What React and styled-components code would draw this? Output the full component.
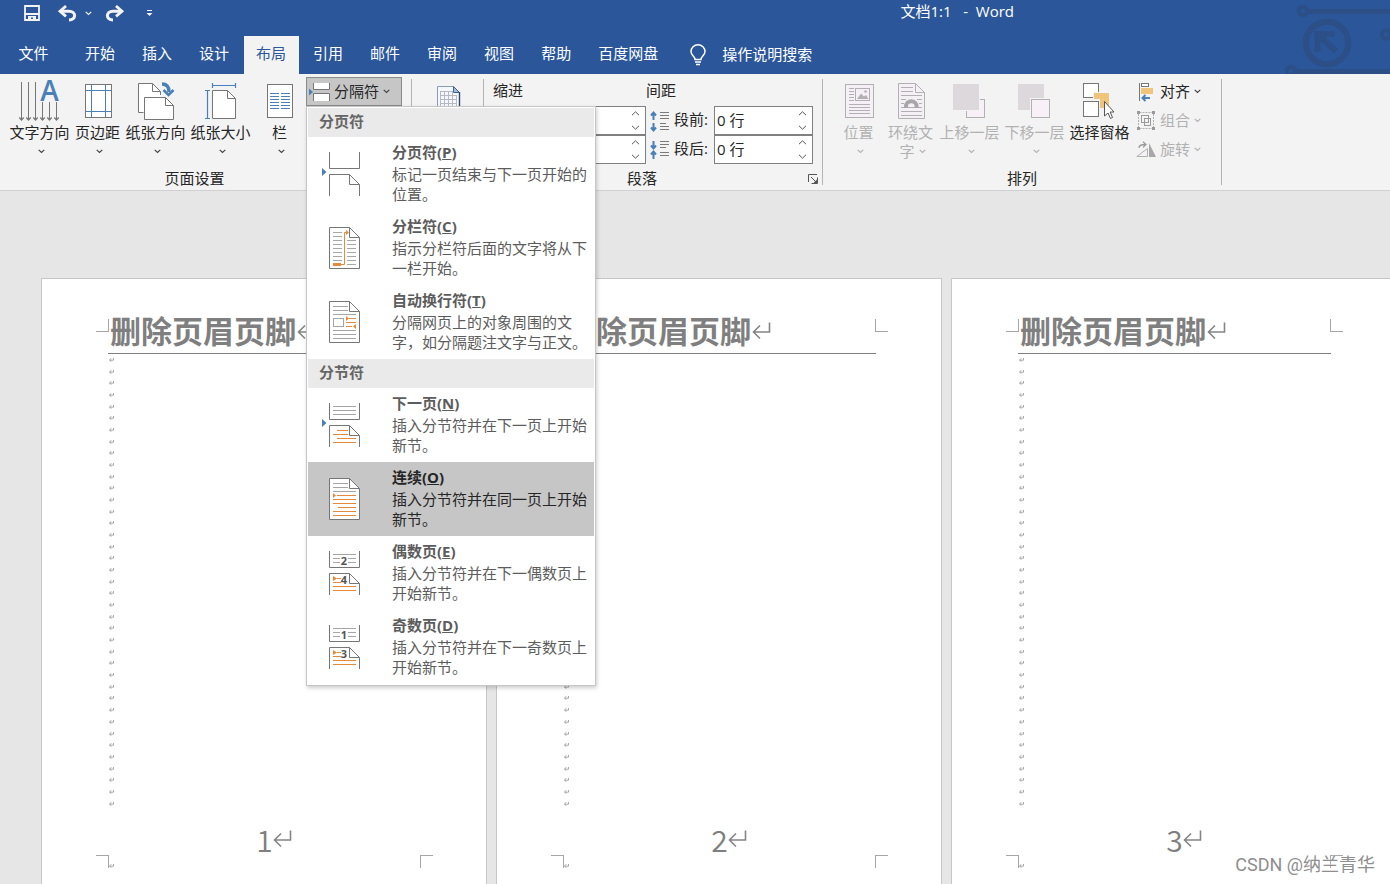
import styled, { createGlobalStyle } from "styled-components";
import React, { useState } from "react";

const GRAY = "#767676";
const BLUE = "#4a80b8";
const ORANGE = "#e58a3c";
const FADED = "#b3b0b3";

const tabs = [
  "开始",
  "插入",
  "设计",
  "布局",
  "引用",
  "邮件",
  "审阅",
  "视图",
  "帮助",
  "百度网盘",
];

const pageBreaks = [
  {
    id: "page",
    title: "分页符",
    hotkey: "P",
    text: "标记一页结束与下一页开始的位置。",
  },
  {
    id: "column",
    title: "分栏符",
    hotkey: "C",
    text: "指示分栏符后面的文字将从下一栏开始。",
  },
  {
    id: "wrap",
    title: "自动换行符",
    hotkey: "T",
    text: "分隔网页上的对象周围的文字，如分隔题注文字与正文。",
  },
];

const sectionBreaks = [
  {
    id: "next",
    title: "下一页",
    hotkey: "N",
    text: "插入分节符并在下一页上开始新节。",
  },
  {
    id: "continuous",
    title: "连续",
    hotkey: "O",
    text: "插入分节符并在同一页上开始新节。",
  },
  {
    id: "even",
    title: "偶数页",
    hotkey: "E",
    text: "插入分节符并在下一偶数页上开始新节。",
  },
  {
    id: "odd",
    title: "奇数页",
    hotkey: "D",
    text: "插入分节符并在下一奇数页上开始新节。",
  },
];

// horizontal rules, used by most of the page-like icons
const Lines = ({ rows, x1, x2, color = "#a6a6a6" }) => (
  <path d={rows.map((y) => `M${x1} ${y}H${x2}`).join("")} stroke={color} />
);

const Chevron = ({ color = "#444" }) => (
  <svg width="7" height="5" viewBox="0 0 7 5" fill="none">
    <path d="M0.7 0.9L3.5 3.5L6.3 0.9" stroke={color} strokeWidth="1.2" />
  </svg>
);

const BigIcon = ({ children }) => (
  <svg width="45" height="44" viewBox="0 0 45 44" fill="none">
    {children}
  </svg>
);

const TextDirectionIcon = () => (
  <BigIcon>
    <path
      d="M4.5 4V42M11.5 4V42M18.5 4V42M25.5 24V42M32.5 24V42M39.5 24V42"
      stroke={GRAY}
    />
    {[4.5, 11.5, 18.5, 25.5, 32.5, 39.5].map((x) => (
      <path key={x} d={`M${x - 2.2} 39.5L${x} 42L${x + 2.2} 39.5`} stroke={GRAY} strokeWidth="1.3" />
    ))}
    <text
      x="32.5"
      y="23"
      textAnchor="middle"
      fontFamily="Open Sans, sans-serif"
      fontWeight="600"
      fontSize="28"
      fill={BLUE}
    >
      A
    </text>
  </BigIcon>
);

const MarginsIcon = () => (
  <BigIcon>
    <rect x="10.5" y="6.5" width="26" height="33" fill="#fff" stroke={GRAY} />
    <path d="M16.5 7V39M30.5 7V39M11 12.5H36M11 33.5H36" stroke={BLUE} />
  </BigIcon>
);

const OrientationIcon = () => (
  <BigIcon>
    <path d="M5.5 5.5H19.5L27.5 13.5V34.5H5.5Z" fill="#fff" />
    <path d="M10.5 34.5H5.5V5.5H19.5L27.5 13.5V17M19.5 5.5V13.5H27.5" stroke={GRAY} />
    <path d="M11.5 19.5H32.5L40.5 27.5V41.5H11.5Z" fill="#fff" stroke={GRAY} />
    <path d="M32.5 19.5V27.5H40.5" stroke={GRAY} />
    <path d="M29 6C34 6 36 9 36 14" stroke={BLUE} strokeWidth="3.4" />
    <path d="M30.5 12L35.5 17L40.5 12" stroke={BLUE} strokeWidth="2.6" />
  </BigIcon>
);

const SizeIcon = () => (
  <BigIcon>
    <path d="M14.5 12.5H29.5L37.5 20.5V40.5H14.5Z" fill="#fff" stroke={GRAY} />
    <path d="M29.5 12.5V20.5H37.5" stroke={GRAY} />
    <path
      d="M14.5 5V10M37.5 5V10M15 7.5H37M7 12.5H12M7 40.5H12M9.5 13V40"
      stroke={BLUE}
      strokeWidth="1.2"
    />
  </BigIcon>
);

const ColumnsIcon = () => (
  <BigIcon>
    <rect x="10.5" y="6.5" width="25" height="33" fill="#fff" stroke={GRAY} />
    <Lines rows={[15.5, 18.5, 21.5, 24.5, 27.5, 30.5]} x1={13} x2={22} color={BLUE} />
    <Lines rows={[15.5, 18.5, 21.5, 24.5, 27.5, 30.5]} x1={24} x2={33} color={BLUE} />
  </BigIcon>
);

const ManuscriptIcon = () => (
  <BigIcon>
    <path d="M12.5 8.5H28.5L34.5 14.5V40.5H12.5Z" fill="#f4f7fc" stroke="#8a9cbd" />
    <path d="M28.5 8.5V14.5H34.5Z" fill="#9dbbe6" stroke="#3f6196" />
    <path d="M34.5 14V40" stroke="#2d4774" strokeWidth="1.4" />
    <path
      d="M15.5 13V38M19.5 13V38M23.5 13V38M27.5 13V38M31.5 17V38M15 13.5H28M15 17.5H32M15 21.5H32M15 25.5H32M15 29.5H32"
      stroke="#b4b9c4"
    />
  </BigIcon>
);

const PositionIcon = () => (
  <BigIcon>
    <rect x="9.5" y="6.5" width="28" height="33" fill="#f5f0f5" stroke={FADED} />
    <rect x="19.5" y="10.5" width="14" height="12" stroke={FADED} />
    <path d="M21 21L25 15.5L28 18.5L30 17L32.5 21Z" fill={FADED} />
    <circle cx="29.5" cy="13.5" r="1.3" fill={FADED} />
    <Lines rows={[10.5, 13.5, 16.5, 19.5, 22.5]} x1={13} x2={18} color={FADED} />
    <Lines rows={[26.5, 29.5, 32.5, 35.5]} x1={13} x2={34} color={FADED} />
  </BigIcon>
);

const WrapTextIcon = () => (
  <BigIcon>
    <path d="M10.5 5.5H27.5L36.5 14.5V40.5H10.5Z" fill="#f5f0f5" stroke={FADED} />
    <path d="M27.5 5.5V14.5H36.5" stroke={FADED} />
    <Lines rows={[9.5, 13.5]} x1={13} x2={25} color={FADED} />
    <Lines rows={[17.5, 33.5, 37.5]} x1={13} x2={34} color={FADED} />
    <path d="M13 21.5H18M29 21.5H34M13 25.5H16M31 25.5H34M13 29.5H34" stroke={FADED} />
    <path d="M18 30V28.5A5.3 5.3 0 0 1 28.6 28.5V30" stroke="#a9a6a9" strokeWidth="4" />
  </BigIcon>
);

const BringForwardIcon = () => (
  <BigIcon>
    <rect x="19.5" y="21.5" width="18" height="18" fill="#f7f1f7" stroke={FADED} />
    <rect x="5" y="5" width="28" height="28" fill="#f3f3f3" />
    <rect x="6" y="6" width="26" height="26" fill="#dcd8dc" />
  </BigIcon>
);

const SendBackwardIcon = () => (
  <BigIcon>
    <rect x="6" y="6" width="26" height="26" fill="#dcd8dc" />
    <rect x="18" y="20" width="21" height="21" fill="#f3f3f3" />
    <rect x="19.5" y="21.5" width="18" height="18" fill="#f7f1f7" stroke={FADED} />
  </BigIcon>
);

const SelectionPaneIcon = () => (
  <BigIcon>
    <rect x="6.5" y="5.5" width="15" height="14" fill="#fff" stroke={GRAY} />
    <rect x="16" y="14" width="17" height="16" fill="#f3f3f3" />
    <path d="M17 15H32V30H23V21H17Z" fill="#efc57b" />
    <rect x="6.5" y="23.5" width="15" height="15" fill="#fff" stroke={GRAY} />
    <path
      d="M27.5 23.5V38L31 35L33.5 40.5L35.5 39.5L33.2 34H37Z"
      fill="#fff"
      stroke="#555"
    />
  </BigIcon>
);

const SmallIcon = ({ children }) => (
  <svg width="20" height="20" viewBox="0 0 20 20" fill="none">
    {children}
  </svg>
);

const AlignIcon = () => (
  <SmallIcon>
    <path d="M3.5 1V19" stroke={GRAY} />
    <rect x="5.5" y="1.5" width="7" height="3" fill="#fff" stroke={GRAY} />
    <rect x="5" y="6" width="12" height="6" fill="#efc57b" />
    <path d="M14 16H7M9.5 13L6.5 16L9.5 19" stroke={BLUE} strokeWidth="2" />
  </SmallIcon>
);

const GroupIcon = () => (
  <SmallIcon>
    <path d="M3.5 1.5H16.5M3.5 17.5H16.5M2.5 3V16M17.5 3V16" stroke={FADED} strokeDasharray="2 1" />
    <rect x="5.5" y="4.5" width="7" height="7" stroke="#9c999c" />
    <rect x="8.5" y="7.5" width="6" height="7" stroke="#9c999c" />
    <path d="M1 0H4V3H1ZM16 0H19V3H16ZM1 16H4V19H1ZM16 16H19V19H16Z" fill="#9c999c" />
  </SmallIcon>
);

const RotateIcon = () => (
  <SmallIcon>
    <path d="M0.8 16.5H11.5V8.5Z" stroke={FADED} />
    <path d="M13 3L20 17H13Z" fill="#a9a6a9" />
    <path d="M3 8C3 5 5 4.5 9 4.5M7 1.8L10 4.5L7 7.4" stroke="#9c999c" strokeWidth="1.3" />
  </SmallIcon>
);

const SpaceBeforeIcon = () => (
  <SmallIcon>
    <path d="M3.5 9V2M1 4.5L3.5 1.5L6 4.5M3.5 12V19M1 16.5L3.5 19.5L6 16.5" stroke={BLUE} strokeWidth="2" />
    <Lines rows={[1.5, 4.5, 7.5, 15.5, 18.5]} x1={10} x2={19} color="#7a7a7a" />
    <path d="M10 12.5H16" stroke="#7a7a7a" />
  </SmallIcon>
);

const SpaceAfterIcon = () => (
  <SmallIcon>
    <path d="M3.5 1V8M1 5.5L3.5 8.5L6 5.5M3.5 19V12M1 14.5L3.5 11.5L6 14.5" stroke={BLUE} strokeWidth="2" />
    <Lines rows={[1.5, 4.5, 12.5, 15.5]} x1={10} x2={19} color="#7a7a7a" />
    <path d="M10 7.5H16" stroke="#7a7a7a" />
  </SmallIcon>
);

const BreaksIcon = () => (
  <svg width="21" height="20" viewBox="0 0 21 20" fill="none">
    <path d="M0 6.5L4 10L0 13.5Z" fill={BLUE} />
    <path d="M4.5 1V7.5H20.5V1" fill="#fff" stroke={GRAY} />
    <path d="M4.5 19V11.5H20.5V19" fill="#fff" stroke={GRAY} />
  </svg>
);

// the two half pages shared by most section breaks
const SplitPage = () => (
  <>
    <path d="M9.5 2V18.5H39.5V2" fill="#fff" stroke={GRAY} />
    <path d="M9.5 46V24.5H29.5L39.5 34.5V46" fill="#fff" stroke={GRAY} />
    <path d="M29.5 24.5V34.5H39.5" stroke={GRAY} />
  </>
);

const WholePage = () => (
  <>
    <path d="M9.5 3.5H29.5L39.5 13.5V44.5H9.5Z" fill="#fff" stroke={GRAY} />
    <path d="M29.5 3.5V13.5H39.5" stroke={GRAY} />
  </>
);

const PageNumbers = ({ top, bottom }) => (
  <>
    <Lines rows={[5.5, 9.5, 13.5]} x1={13} x2={36} />
    <rect x="20" y="7" width="8" height="10" fill="#fff" />
    <Lines rows={[37.5, 41.5]} x1={13} x2={36} color={ORANGE} />
    <path d="M13 27L17 29.5L13 32ZM17 29H21V30H17ZM13 33H21V34H13Z" fill={ORANGE} />
    <g
      fontFamily="Open Sans, sans-serif"
      fontWeight="700"
      fontSize="11"
      fill="#555"
      textAnchor="middle"
    >
      <text x="24" y="16">
        {top}
      </text>
      <text x="24" y="35">
        {bottom}
      </text>
    </g>
  </>
);

const breakIcons = {
  page: (
    <>
      <path d="M2 18L6.5 22L2 26Z" fill={BLUE} />
      <path d="M9.5 2V18.5H39.5V2M9.5 46V24.5H29.5L39.5 34.5V46M29.5 24.5V34.5H39.5" stroke={GRAY} />
    </>
  ),
  column: (
    <>
      <WholePage />
      <Lines rows={[8.5, 12.5, 16.5, 20.5, 24.5, 28.5, 32.5, 36.5]} x1={13} x2={22} />
      <Lines rows={[16.5, 20.5, 24.5, 28.5, 32.5, 36.5, 40.5]} x1={27} x2={36} />
      <path d="M13 39H21V42H13Z" fill={ORANGE} />
      <path d="M21 40.5H24.5V8.5H27" stroke={ORANGE} />
      <path d="M26 6L29 8.5L26 11Z" fill={ORANGE} />
    </>
  ),
  wrap: (
    <>
      <WholePage />
      <Lines rows={[8.5, 12.5]} x1={13} x2={28} />
      <Lines rows={[16.5, 32.5, 36.5, 40.5]} x1={13} x2={36} />
      <rect x="13.5" y="20.5" width="10" height="8" stroke="#a6a6a6" />
      <path d="M29 20.5H36M26 24.5H36M26 28.5H32" stroke={ORANGE} />
      <path d="M26 18L29 20.5L26 23ZM36 26L33 28.5L36 31Z" fill={ORANGE} />
    </>
  ),
  next: (
    <>
      <path d="M2 18L6.5 22L2 26Z" fill={BLUE} />
      <SplitPage />
      <Lines rows={[5.5, 9.5, 13.5]} x1={13} x2={36} />
      <path d="M17 29.5H28M13 33.5H28M17 37.5H36M13 41.5H36" stroke={ORANGE} />
    </>
  ),
  continuous: (
    <>
      <WholePage />
      <Lines rows={[8.5, 12.5]} x1={13} x2={28} />
      <Lines rows={[16.5]} x1={13} x2={36} />
      <path d="M17 20.5H36M13 24.5H36M13 28.5H36M18 32.5H36M13 36.5H36M13 40.5H36" stroke={ORANGE} />
      <path d="M13 18L16 20.5L13 23Z" fill={ORANGE} />
    </>
  ),
  even: (
    <>
      <SplitPage />
      <PageNumbers top="2" bottom="4" />
    </>
  ),
  odd: (
    <>
      <SplitPage />
      <PageNumbers top="1" bottom="3" />
    </>
  ),
};

const ReturnMark = () => (
  <svg width="19" height="18" viewBox="0 0 19 18" fill="none">
    <path d="M8 3.5L1.5 10L8 16.5M1.5 10H17.5V0.5" stroke="#858585" strokeWidth="1.6" />
  </svg>
);

const SmallReturn = () => (
  <svg width="6" height="6" viewBox="0 0 6 6" fill="none">
    <path d="M2.2 1.2L0.6 3L2.2 4.8M0.6 3.2H4.5V1" stroke="#949494" strokeWidth="0.8" />
  </svg>
);

const QuickAccess = () => (
  <QuickBar>
    <IconButton $w={16} aria-label="保存">
      <svg width="16" height="16" viewBox="0 0 16 16" fill="none">
        <path d="M1 1H15V15H1ZM1 9H15" stroke="#f3f3f3" strokeWidth="1.8" />
        <path d="M4 15V11H12V15H9V12.5H7V15Z" fill="#f3f3f3" />
      </svg>
    </IconButton>
    <IconButton $w={19} $left={18} aria-label="撤消">
      <svg width="19" height="17" viewBox="0 0 19 17" fill="none">
        <path d="M2 6.2H11C18.5 6.2 18.5 15 11 15" stroke="#f3f3f3" strokeWidth="3" />
        <path d="M8 1L2 6.2L8 11.4" stroke="#f3f3f3" strokeWidth="2.8" />
      </svg>
    </IconButton>
    <IconButton $w={7} $left={8} aria-label="撤消选项">
      <Chevron color="#f3f3f3" />
    </IconButton>
    <IconButton $w={19} $left={13} aria-label="恢复">
      <svg width="19" height="17" viewBox="0 0 19 17" fill="none">
        <path d="M17 6.2H8C0.5 6.2 0.5 15 8 15" stroke="#f3f3f3" strokeWidth="3" />
        <path d="M11 1L17 6.2L11 11.4" stroke="#f3f3f3" strokeWidth="2.8" />
      </svg>
    </IconButton>
    <IconButton $w={7} $left={22} aria-label="自定义快速访问工具栏">
      <svg width="7" height="8" viewBox="0 0 7 8">
        <path d="M1 1H6V2H1ZM0.5 4H6.5L3.5 7Z" fill="#f3f3f3" />
      </svg>
    </IconButton>
  </QuickBar>
);

const HeaderArt = () => (
  <ArtSvg width="106" height="74" viewBox="0 0 106 74" fill="none">
    <g stroke="#2b4f86">
      <circle cx="19" cy="11" r="4.2" strokeWidth="4" />
      <path d="M25 11.5H106M13 71.5H106" strokeWidth="5" />
      <circle cx="43" cy="43" r="21.2" strokeWidth="6.2" />
      <path d="M33.5 52V34H51M36 36.5L52 51.5" strokeWidth="6" />
      <circle cx="102" cy="34.5" r="4.2" strokeWidth="4" />
      <circle cx="7" cy="71" r="4.2" strokeWidth="4" />
    </g>
  </ArtSvg>
);

const BigButton = ({ icon, label, second, w = 65, disabled, menu = true }) => (
  <BigButtonStyle $w={w} disabled={disabled}>
    {icon}
    <span>{label}</span>
    {menu && (
      <SecondLine>
        {second}
        <Chevron color={disabled ? "#b1b1b1" : "#444"} />
      </SecondLine>
    )}
  </BigButtonStyle>
);

const SmallButton = ({ icon, label, disabled }) => (
  <SmallButtonStyle disabled={disabled}>
    {icon}
    <span>{label}</span>
    <Chevron color={disabled ? "#b1b1b1" : "#444"} />
  </SmallButtonStyle>
);

const NumberField = ({ id, label, initial }) => {
  const [value, setValue] = useState(initial);
  return (
    <FieldBox>
      <FieldInput
        id={id}
        aria-label={label}
        value={value}
        onChange={(ev) => setValue(ev.target.value)}
      />
      <Spinner>
        <SpinButton aria-label="增加">
          <svg width="9" height="5" viewBox="0 0 9 5" fill="none">
            <path d="M1 4.2L4.5 0.8L8 4.2" stroke="#555" />
          </svg>
        </SpinButton>
        <SpinButton aria-label="减少">
          <svg width="9" height="5" viewBox="0 0 9 5" fill="none">
            <path d="M1 0.8L4.5 4.2L8 0.8" stroke="#555" />
          </svg>
        </SpinButton>
      </Spinner>
    </FieldBox>
  );
};

const GroupFooter = ({ label, launcher }) => (
  <GroupFooterStyle>
    <GroupName>{label}</GroupName>
    {launcher && (
      <Launcher aria-label={`${label}对话框`}>
        <svg width="10" height="10" viewBox="0 0 10 10" fill="none">
          <path d="M0.5 8V0.5H9M3 3L8 8M9.5 3.5V9.5H3.5" stroke="#555" />
          <path d="M5.5 9H9V5.5Z" fill="#555" />
        </svg>
      </Launcher>
    )}
  </GroupFooterStyle>
);

const BreakItems = ({ items, selected, onSelect }) =>
  items.map((item) => (
    <MenuItem
      key={item.id}
      role="menuitem"
      $active={item.id === selected}
      onMouseEnter={() => onSelect(item.id)}
    >
      <svg width="42" height="48" viewBox="0 0 42 48" fill="none">
        {breakIcons[item.id]}
      </svg>
      <MenuText>
        <strong>
          {item.title}(<u>{item.hotkey}</u>)
        </strong>
        <span>{item.text}</span>
      </MenuText>
    </MenuItem>
  ));

const BreaksMenu = () => {
  const [selected, setSelected] = useState("continuous");
  return (
    <Menu role="menu">
      <MenuHeading>分页符</MenuHeading>
      <BreakItems items={pageBreaks} selected={selected} onSelect={setSelected} />
      <MenuHeading>分节符</MenuHeading>
      <BreakItems items={sectionBreaks} selected={selected} onSelect={setSelected} />
    </Menu>
  );
};

const DocumentPage = ({ number }) => (
  <Paper>
    <PageHeader>
      <Corner $v="right" $h="bottom" $top />
      <PageTitle>
        删除页眉页脚
        <ReturnMark />
      </PageTitle>
      <Corner $v="left" $h="bottom" $top />
    </PageHeader>
    <PageBody>
      {Array.from({ length: 39 }, (_, i) => (
        <SmallReturn key={i} />
      ))}
    </PageBody>
    <PageFooter>
      <Corner $v="right" $h="top" />
      <div>
        <PageNumber>
          <span />
          <span>{number}</span>
          <ReturnMark />
        </PageNumber>
        <SmallReturn />
      </div>
      <Corner $v="left" $h="top" />
    </PageFooter>
  </Paper>
);

const App = () => {
  const [activeTab, setActiveTab] = useState("布局");
  const [menuOpen, setMenuOpen] = useState(true);

  return (
    <Wrapper>
      <GlobalStyle />
      <Header>
        <HeaderArt />
        <TitleBar>
          <QuickAccess />
          <Title>文档1:1&nbsp;&nbsp; -&nbsp; Word</Title>
        </TitleBar>
        <TabRow>
          <FileTab>文件</FileTab>
          {tabs.map((tab) => (
            <Tab key={tab} $active={tab === activeTab} onClick={() => setActiveTab(tab)}>
              {tab}
            </Tab>
          ))}
          <Search>
            <svg width="18" height="22" viewBox="0 0 18 22" fill="none">
              <path
                d="M6 15.5C6 12.5 2 11.5 2 7.6A7 6.8 0 0 1 16 7.6C16 11.5 12 12.5 12 15.5Z"
                stroke="#fff"
                strokeWidth="1.5"
              />
              <path d="M6 18H12M7 20.5H11" stroke="#fff" strokeWidth="1.5" />
            </svg>
            <SearchInput placeholder="操作说明搜索" aria-label="操作说明搜索" />
          </Search>
        </TabRow>
      </Header>

      <Ribbon>
        <Group>
          <Tools $left={7} $right={9}>
            <BigButton icon={<TextDirectionIcon />} label="文字方向" />
            <BigButton icon={<MarginsIcon />} label="页边距" w={51} />
            <BigButton icon={<OrientationIcon />} label="纸张方向" />
            <BigButton icon={<SizeIcon />} label="纸张大小" />
            <BigButton icon={<ColumnsIcon />} label="栏" w={53} />
            <MenuAnchor>
              <BreaksButton aria-expanded={menuOpen} onClick={() => setMenuOpen(!menuOpen)}>
                <BreaksIcon />
                <span>分隔符</span>
                <Chevron />
              </BreaksButton>
              {menuOpen && <BreaksMenu />}
            </MenuAnchor>
          </Tools>
          <GroupFooter label="页面设置" launcher />
        </Group>
        <Separator />
        <Group>
          <Tools $left={3} $right={3}>
            <BigButtonStyle $w={65} aria-label="稿纸设置">
              <ManuscriptIcon />
            </BigButtonStyle>
          </Tools>
        </Group>
        <Separator />
        <Group>
          <Tools $left={9} $right={9}>
            <IndentColumn>
              <ColumnTitle>缩进</ColumnTitle>
              <NumberField id="indent-left" label="左缩进" initial="" />
              <NumberField id="indent-right" label="右缩进" initial="" />
            </IndentColumn>
            <SpacingColumn>
              <ColumnTitle>间距</ColumnTitle>
              <FieldRow>
                <SpaceBeforeIcon />
                <FieldLabel htmlFor="space-before">段前:</FieldLabel>
                <NumberField id="space-before" label="段前" initial="0 行" />
              </FieldRow>
              <FieldRow>
                <SpaceAfterIcon />
                <FieldLabel htmlFor="space-after">段后:</FieldLabel>
                <NumberField id="space-after" label="段后" initial="0 行" />
              </FieldRow>
            </SpacingColumn>
          </Tools>
          <GroupFooter label="段落" launcher />
        </Group>
        <Separator />
        <Group>
          <Tools $left={10} $right={20}>
            <BigButton icon={<PositionIcon />} label="位置" w={51} disabled />
            <BigButton icon={<WrapTextIcon />} label="环绕文" second="字" w={53} disabled />
            <BigButton icon={<BringForwardIcon />} label="上移一层" disabled />
            <BigButton icon={<SendBackwardIcon />} label="下移一层" disabled />
            <BigButton icon={<SelectionPaneIcon />} label="选择窗格" menu={false} />
            <SmallColumn>
              <SmallButton icon={<AlignIcon />} label="对齐" />
              <SmallButton icon={<GroupIcon />} label="组合" disabled />
              <SmallButton icon={<RotateIcon />} label="旋转" disabled />
            </SmallColumn>
          </Tools>
          <GroupFooter label="排列" />
        </Group>
        <Separator />
      </Ribbon>

      <Workspace>
        <DocumentPage number={1} />
        <DocumentPage number={2} />
        <DocumentPage number={3} />
      </Workspace>
      <Watermark>CSDN @纳兰青华</Watermark>
    </Wrapper>
  );
};

const GlobalStyle = createGlobalStyle`
  * {
    box-sizing: border-box;
  }

  body {
    margin: 0;
    overflow: hidden;
  }

  body, button, input {
    font-family: "Open Sans", "Noto Sans CJK SC", sans-serif;
    font-size: 15px;
    line-height: 20px;
    color: #262626;
  }

  button {
    background: none;
    border: none;
    padding: 0;
    white-space: nowrap;
  }

  svg {
    display: block;
    flex-shrink: 0;
    overflow: visible;
  }
`;

const Wrapper = styled.div`
  position: relative;
  height: 100vh;
  display: flex;
  flex-direction: column;
  overflow: hidden;
`;

const Header = styled.header`
  position: relative;
  background: #2b579a;
  color: #fff;
`;

const ArtSvg = styled.svg`
  position: absolute;
  top: 0;
  right: 0;
  overflow: hidden;
`;

const TitleBar = styled.div`
  display: flex;
  align-items: center;
  justify-content: space-between;
  height: 26px;
  margin-bottom: 10px;
  padding: 0 376px 0 24px;
`;

const QuickBar = styled.div`
  display: flex;
  align-items: center;
`;

const IconButton = styled.button`
  display: flex;
  align-items: center;
  justify-content: center;
  width: ${(props) => props.$w}px;
  margin-left: ${(props) => props.$left || 0}px;
`;

const Title = styled.div`
  padding-bottom: 4px;
`;

const TabRow = styled.nav`
  display: flex;
  gap: 2px;
  height: 38px;
`;

const Tab = styled.button`
  min-width: 55px;
  padding: 0 13px 4px 12px;
  color: ${(props) => (props.$active ? "#2b579a" : "#fff")};
  background: ${(props) => (props.$active ? "#f3f3f3" : "transparent")};
`;

const FileTab = styled(Tab)`
  width: 68px;
  margin-right: 3px;
`;

const Search = styled.label`
  display: flex;
  align-items: center;
  gap: 15px;
  margin-left: 16px;
`;

const SearchInput = styled.input`
  width: 160px;
  padding: 0 0 2px;
  border: none;
  outline: none;
  background: transparent;
  color: #fff;

  &::placeholder {
    color: #fff;
    opacity: 1;
  }
`;

const Ribbon = styled.div`
  display: flex;
  height: 117px;
  background: #f3f3f3;
  border-bottom: 1px solid #d0d0d0;
`;

const Group = styled.section`
  display: flex;
  flex-direction: column;
  justify-content: space-between;
  padding: 3px 0 2px;
`;

const Separator = styled.div`
  width: 1px;
  margin: 5px 0;
  background: #b4b4b4;
`;

const Tools = styled.div`
  display: flex;
  align-items: flex-start;
  padding-left: ${(props) => props.$left}px;
  padding-right: ${(props) => props.$right}px;
`;

const BigButtonStyle = styled.button`
  display: flex;
  flex-direction: column;
  align-items: center;
  width: ${(props) => props.$w}px;
  padding-top: 1px;

  &:disabled {
    color: #b1b1b1;
  }
`;

const SecondLine = styled.span`
  display: flex;
  align-items: center;
  gap: 4px;
  height: 18px;
  padding-left: 4px;
`;

const SmallColumn = styled.div`
  display: flex;
  flex-direction: column;
  margin-left: 4px;
`;

const SmallButtonStyle = styled.button`
  display: flex;
  align-items: center;
  gap: 4px;
  height: 29px;

  span {
    padding-bottom: 2px;
  }

  &:disabled {
    color: #b1b1b1;
  }
`;

const MenuAnchor = styled.div`
  position: relative;
`;

const BreaksButton = styled.button`
  display: flex;
  align-items: center;
  gap: 4px;
  width: 96px;
  height: 29px;
  padding-left: 2px;
  background: #c6c6c6;
  border: 1px solid #8a8a8a;

  span {
    padding-bottom: 2px;
  }
`;

const Menu = styled.div`
  position: absolute;
  top: 29px;
  left: 0;
  z-index: 2;
  width: 290px;
  padding: 1px;
  background: #fff;
  border: 1px solid #c6c6c6;
  box-shadow: 1px 2px 4px rgba(0, 0, 0, 0.2);
`;

const MenuHeading = styled.div`
  height: 29px;
  padding-left: 11px;
  font-weight: 700;
  line-height: 26px;
  color: #666;
  background: #eaeaea;
`;

const MenuItem = styled.button`
  display: flex;
  align-items: center;
  gap: 30px;
  width: 100%;
  height: 74px;
  padding-left: 12px;
  text-align: left;
  white-space: normal;
  color: ${(props) => (props.$active ? "#262626" : "#5c5c5c")};
  background: ${(props) => (props.$active ? "#c6c6c6" : "transparent")};
`;

const MenuText = styled.span`
  display: flex;
  flex-direction: column;
  gap: 2px;
  height: 64px;
`;

const IndentColumn = styled.div`
  display: flex;
  flex-direction: column;
  align-items: flex-end;
  width: 153px;
`;

const SpacingColumn = styled.div`
  width: 167px;
`;

const ColumnTitle = styled.div`
  align-self: flex-start;
  height: 29px;
  line-height: 27px;
`;

const FieldRow = styled.div`
  display: flex;
  align-items: center;
  padding-left: 4px;
`;

const FieldLabel = styled.label`
  flex: 1;
  padding: 0 0 3px 4px;
`;

const FieldBox = styled.div`
  display: flex;
  width: 99px;
  height: 29px;
  background: #fff;
  border: 1px solid #808080;
`;

const FieldInput = styled.input`
  flex: 1;
  min-width: 0;
  padding: 0 2px 2px;
  border: none;
  outline: none;
  background: transparent;
`;

const Spinner = styled.div`
  display: flex;
  flex-direction: column;
  width: 20px;
`;

const SpinButton = styled.button`
  flex: 1;
  display: flex;
  align-items: center;
  justify-content: center;
`;

const GroupFooterStyle = styled.div`
  display: flex;
  align-items: center;
`;

const GroupName = styled.div`
  flex: 1;
  text-align: center;
`;

const Launcher = styled.button`
  width: 10px;
  margin: 2px 4px 0 8px;
`;

const Workspace = styled.main`
  flex: 1;
  display: flex;
  gap: 9px;
  min-height: 0;
  padding: 87px 0 0 41px;
  overflow: hidden;
  background: #e6e6e6;
`;

const Paper = styled.article`
  flex: 0 0 446px;
  height: 632px;
  padding: 0 53px 0 54px;
  background: #fff;
  border: 1px solid #c6c6c6;
`;

const PageHeader = styled.div`
  display: grid;
  grid-template-columns: 13px 1fr 13px;
`;

const Corner = styled.span`
  width: 13px;
  height: 13px;
  margin-top: ${(props) => (props.$top ? 40 : 32)}px;
  border: 0 solid #a6a6a6;
  border-${(props) => props.$v}-width: 1px;
  border-${(props) => props.$h}-width: 1px;
`;

const PageTitle = styled.h1`
  display: flex;
  align-items: center;
  gap: 1px;
  margin: 0 -1px;
  padding: 32px 0 2px 2px;
  font-size: 31px;
  font-weight: 700;
  line-height: 40px;
  white-space: nowrap;
  color: #7f7f7f;
  border-bottom: 1px solid #7f7f7f;
`;

const PageBody = styled.div`
  display: flex;
  flex-direction: column;
  justify-content: space-between;
  height: 450px;
  margin: 3px 0 16px 13px;
`;

const PageFooter = styled.div`
  display: grid;
  grid-template-columns: 13px 1fr 13px;
`;

const PageNumber = styled.div`
  display: grid;
  grid-template-columns: 1fr auto 1fr;
  align-items: center;
  margin-bottom: 8px;
  font-family: "Noto Sans CJK SC", sans-serif;
  font-size: 30px;
  font-weight: 350;
  line-height: 32px;
  color: #7f7f7f;
`;

const Watermark = styled.div`
  position: absolute;
  right: 15px;
  bottom: 7px;
  font-family: Roboto, "Noto Sans CJK SC", sans-serif;
  font-size: 18px;
  line-height: 24px;
  color: #8e8e8e;
  text-shadow: 0 0 2px #fff;
`;

export default App;
